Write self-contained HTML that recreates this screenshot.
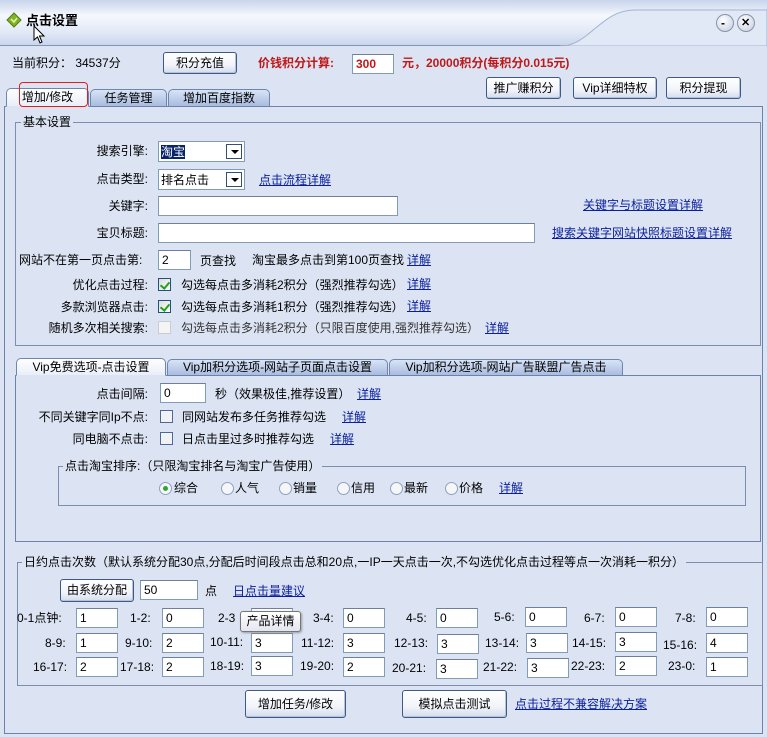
<!DOCTYPE html><html><head><meta charset="utf-8"><style>
*{box-sizing:border-box;margin:0;padding:0}
body{width:767px;height:737px;overflow:hidden;background:#dce4f4;font:12px "Liberation Sans","Noto Sans CJK SC",sans-serif;color:#000;position:relative}
.a{position:absolute;white-space:nowrap;line-height:14px}
.r{text-align:right}
.in{position:absolute;background:#fff;border:1px solid #7f9db9;border-top-color:#6d7f9a;height:20px;padding:2px 3px;line-height:14px}
.btn{position:absolute;border:1px solid #3d5a86;border-radius:3px;background:linear-gradient(#fff,#f2f4fa 60%,#d3dbec);text-align:center;line-height:20px;box-shadow:inset -1px -1px 0 #b5c2dc}
.lk{color:#0a1f9c;text-decoration:underline}
.cb{position:absolute;width:13px;height:13px;border:1px solid #1c5180;background:linear-gradient(135deg,#dcdcd6,#fff)}
.cb.ck::after{content:"";position:absolute;left:3px;top:1px;width:4px;height:7px;border:solid #21a121;border-width:0 2px 2px 0;transform:rotate(40deg)}
.fs{position:absolute;border:1px solid #7c8daf}
.lg{position:absolute;background:#dce4f4;padding:0 2px;line-height:14px}
.tab{position:absolute;border:1px solid #6e86ad;border-bottom:none;border-radius:5px 5px 0 0;background:linear-gradient(#d8e3f6,#a9bcdf);text-align:center;line-height:17px}
.tab.on{background:linear-gradient(#fff,#e9eef8)}
.rd{position:absolute;width:13px;height:13px;border:1px solid #8ea2c0;border-radius:50%;background:#f4f6f8}
.sel{position:absolute;background:#fff;border:1px solid #7f9db9;height:21px}
.sel b{position:absolute;right:2px;top:2px;width:16px;height:15px;border:1px solid #34506e;background:#fff}
.sel b::after{content:"";position:absolute;left:4px;top:5px;border:4px solid transparent;border-top:4px solid #000}
</style></head><body>
<!-- title bar -->
<div style="position:absolute;left:0;top:0;width:767px;height:46px;background:linear-gradient(#c9d5ec,#f5f8fd 35%,#e3eaf7 70%,#cbd6ec);border-bottom:1px solid #7f95bd"></div>
<svg style="position:absolute;left:560px;top:0" width="207" height="46"><path d="M0 46 C30 46 40 10 75 10 L207 10 L207 46 Z" fill="#e1e8f6" stroke="#a2b3d3"/></svg>
<svg style="position:absolute;left:6px;top:12px" width="16" height="16"><path d="M8 1 L15 8 L8 15 L1 8Z" fill="#7fb526" stroke="#4e7c12"/><path d="M5 7 L8 10 L11 6" fill="none" stroke="#e8f5a0" stroke-width="1.5"/></svg>
<div class="a" style="left:26px;top:14px;font-weight:bold;font-size:13px">点击设置</div>
<svg style="position:absolute;left:33px;top:25px" width="14" height="20"><path d="M1 1 L1 15 L4.5 12 L7 18 L9 17 L6.5 11 L11 11 Z" fill="#fff" stroke="#000"/></svg>
<div style="position:absolute;left:716px;top:14px;width:18px;height:18px;border-radius:50%;border:1px solid #8894aa;background:radial-gradient(circle at 40% 35%,#fff,#c2cbdc)"></div><div class="a" style="left:721px;top:16px;font-weight:bold">-</div>
<div style="position:absolute;left:737px;top:14px;width:18px;height:18px;border-radius:50%;border:1px solid #8894aa;background:radial-gradient(circle at 40% 35%,#fff,#c2cbdc)"></div><div class="a" style="left:741px;top:16px;font-weight:bold;font-size:11px">✕</div>

<div class="a" style="left:12px;top:56px">当前积分： 34537分</div>
<div class="btn" style="left:163px;top:52px;width:74px;height:22px">积分充值</div>
<div class="a" style="left:258px;top:56px;color:#c01818;font-weight:bold">价钱积分计算:</div>
<div class="in" style="left:352px;top:54px;width:42px;color:#c01818;font-weight:bold">300</div>
<div class="a" style="left:402px;top:56px;color:#c01818;font-weight:bold">元，20000积分(每积分0.015元)</div>
<div class="btn" style="left:486px;top:77px;width:75px;height:22px">推广赚积分</div>
<div class="btn" style="left:573px;top:77px;width:84px;height:22px">Vip详细特权</div>
<div class="btn" style="left:666px;top:77px;width:75px;height:22px">积分提现</div>

<!-- main tabs -->
<div style="position:absolute;left:4px;top:106px;width:759px;height:628px;border:1px solid #6b82aa"></div>
<div class="tab on" style="left:6px;top:88px;width:83px;height:19px;border-bottom:1px solid #dce4f4">增加/修改</div>
<div style="position:absolute;left:19px;top:82px;width:69px;height:25px;border:1px solid #e02020;border-radius:4px"></div>
<div class="tab" style="left:90px;top:89px;width:77px;height:17px">任务管理</div>
<div class="tab" style="left:168px;top:89px;width:102px;height:17px">增加百度指数</div>

<!-- basic settings -->
<div class="fs" style="left:15px;top:122px;width:746px;height:224px"></div>
<div class="lg" style="left:21px;top:115px">基本设置</div>
<div class="a r" style="left:0;width:148px;top:144px">搜索引擎:</div>
<div class="sel" style="left:158px;top:141px;width:87px"><span class="a" style="left:2px;top:3px;background:#0a246a;color:#fff">淘宝</span><b></b></div>
<div class="a r" style="left:0;width:148px;top:172px">点击类型:</div>
<div class="sel" style="left:158px;top:169px;width:87px"><span class="a" style="left:2px;top:3px">排名点击</span><b></b></div>
<div class="a lk" style="left:259px;top:173px">点击流程详解</div>
<div class="a r" style="left:0;width:148px;top:199px">关键字:</div>
<div class="in" style="left:158px;top:196px;width:240px"></div>
<div class="a lk" style="left:583px;top:198px">关键字与标题设置详解</div>
<div class="a r" style="left:0;width:148px;top:226px">宝贝标题:</div>
<div class="in" style="left:158px;top:223px;width:377px"></div>
<div class="a lk" style="left:552px;top:226px">搜索关键字网站快照标题设置详解</div>
<div class="a" style="left:19px;top:253px">网站不在第一页点击第:</div>
<div class="in" style="left:158px;top:250px;width:33px">2</div>
<div class="a" style="left:200px;top:254px">页查找</div>
<div class="a" style="left:252px;top:253px">淘宝最多点击到第100页查找</div>
<div class="a lk" style="left:407px;top:253px">详解</div>
<div class="a r" style="left:0;width:148px;top:278px">优化点击过程:</div>
<div class="cb ck" style="left:158px;top:278px"></div>
<div class="a" style="left:181px;top:278px">勾选每点击多消耗2积分（强烈推荐勾选）</div>
<div class="a lk" style="left:407px;top:277px">详解</div>
<div class="a r" style="left:0;width:148px;top:300px">多款浏览器点击:</div>
<div class="cb ck" style="left:158px;top:300px"></div>
<div class="a" style="left:181px;top:300px">勾选每点击多消耗1积分（强烈推荐勾选）</div>
<div class="a lk" style="left:407px;top:299px">详解</div>
<div class="a r" style="left:0;width:148px;top:321px">随机多次相关搜索:</div>
<div class="cb" style="left:158px;top:321px;border-color:#c8ccd4;background:#f4f4f2"></div>
<div class="a" style="left:181px;top:321px;color:#333">勾选每点击多消耗2积分（只限百度使用,强烈推荐勾选）</div>
<div class="a lk" style="left:485px;top:321px">详解</div>

<!-- second tabs -->
<div style="position:absolute;left:15px;top:375px;width:746px;height:167px;border:1px solid #6b82aa"></div>
<div class="tab on" style="left:16px;top:358px;width:150px;height:18px;border-bottom:1px solid #dce4f4">Vip免费选项-点击设置</div>
<div class="tab" style="left:167px;top:359px;width:221px;height:16px;line-height:15px">Vip加积分选项-网站子页面点击设置</div>
<div class="tab" style="left:389px;top:359px;width:234px;height:16px;line-height:15px">Vip加积分选项-网站广告联盟广告点击</div>
<div class="a r" style="left:0;width:148px;top:387px">点击间隔:</div>
<div class="in" style="left:160px;top:383px;width:46px">0</div>
<div class="a" style="left:215px;top:387px">秒（效果极佳,推荐设置）</div>
<div class="a lk" style="left:357px;top:387px">详解</div>
<div class="a r" style="left:0;width:148px;top:410px">不同关键字同Ip不点:</div>
<div class="cb" style="left:160px;top:410px;border-color:#4f6a92;background:#f0f2f6"></div>
<div class="a" style="left:182px;top:410px">同网站发布多任务推荐勾选</div>
<div class="a lk" style="left:342px;top:410px">详解</div>
<div class="a r" style="left:0;width:148px;top:432px">同电脑不点击:</div>
<div class="cb" style="left:160px;top:432px;border-color:#4f6a92;background:#f0f2f6"></div>
<div class="a" style="left:182px;top:432px">日点击里过多时推荐勾选</div>
<div class="a lk" style="left:330px;top:432px">详解</div>
<div class="fs" style="left:58px;top:466px;width:688px;height:40px"></div>
<div class="lg" style="left:63px;top:459px">点击淘宝排序:（只限淘宝排名与淘宝广告使用）</div>
<div class="rd" style="left:159px;top:482px"><div style="position:absolute;left:3px;top:3px;width:5px;height:5px;border-radius:50%;background:#2fa72f"></div></div><div class="a" style="left:174px;top:481px">综合</div>
<div class="rd" style="left:221px;top:482px"></div><div class="a" style="left:235px;top:481px">人气</div>
<div class="rd" style="left:279px;top:482px"></div><div class="a" style="left:293px;top:481px">销量</div>
<div class="rd" style="left:337px;top:482px"></div><div class="a" style="left:351px;top:481px">信用</div>
<div class="rd" style="left:390px;top:482px"></div><div class="a" style="left:404px;top:481px">最新</div>
<div class="rd" style="left:445px;top:482px"></div><div class="a" style="left:459px;top:481px">价格</div>
<div class="a lk" style="left:499px;top:481px">详解</div>

<!-- daily -->
<div class="fs" style="left:17px;top:562px;width:746px;height:124px"></div>
<div class="lg" style="left:22px;top:555px">日约点击次数（默认系统分配30点,分配后时间段点击总和20点,一IP一天点击一次,不勾选优化点击过程等点一次消耗一积分）</div>
<div class="btn" style="left:60px;top:579px;width:74px;height:23px">由系统分配</div>
<div class="in" style="left:140px;top:580px;width:58px">50</div>
<div class="a" style="left:205px;top:584px">点</div>
<div class="a lk" style="left:233px;top:584px">日点击量建议</div>

<div class="a" style="left:17px;top:611px">0-1点钟:</div><div class="in" style="left:76px;top:608px;width:42px">1</div>
<div class="a" style="left:130px;top:611px">1-2:</div><div class="in" style="left:162px;top:608px;width:42px">0</div>
<div class="a" style="left:218px;top:611px">2-3</div><div class="in" style="left:251px;top:608px;width:42px"></div>
<div class="a" style="left:313px;top:611px">3-4:</div><div class="in" style="left:343px;top:608px;width:42px">0</div>
<div class="a" style="left:406px;top:611px">4-5:</div><div class="in" style="left:436px;top:608px;width:42px">0</div>
<div class="a" style="left:494px;top:610px">5-6:</div><div class="in" style="left:525px;top:607px;width:42px">0</div>
<div class="a" style="left:584px;top:611px">6-7:</div><div class="in" style="left:615px;top:607px;width:42px">0</div>
<div class="a" style="left:675px;top:611px">7-8:</div><div class="in" style="left:706px;top:607px;width:42px">0</div>

<div class="a" style="left:45px;top:636px">8-9:</div><div class="in" style="left:76px;top:633px;width:42px">1</div>
<div class="a" style="left:125px;top:636px">9-10:</div><div class="in" style="left:162px;top:633px;width:42px">2</div>
<div class="a" style="left:210px;top:635px">10-11:</div><div class="in" style="left:251px;top:633px;width:42px">3</div>
<div class="a" style="left:301px;top:636px">11-12:</div><div class="in" style="left:343px;top:633px;width:42px">3</div>
<div class="a" style="left:394px;top:636px">12-13:</div><div class="in" style="left:437px;top:634px;width:42px">3</div>
<div class="a" style="left:485px;top:636px">13-14:</div><div class="in" style="left:526px;top:633px;width:42px">3</div>
<div class="a" style="left:572px;top:636px">14-15:</div><div class="in" style="left:615px;top:632px;width:42px">3</div>
<div class="a" style="left:663px;top:638px">15-16:</div><div class="in" style="left:706px;top:633px;width:42px">4</div>

<div class="a" style="left:33px;top:660px">16-17:</div><div class="in" style="left:76px;top:657px;width:42px">2</div>
<div class="a" style="left:120px;top:660px">17-18:</div><div class="in" style="left:162px;top:657px;width:42px">2</div>
<div class="a" style="left:210px;top:659px">18-19:</div><div class="in" style="left:251px;top:656px;width:42px">3</div>
<div class="a" style="left:300px;top:659px">19-20:</div><div class="in" style="left:343px;top:657px;width:42px">2</div>
<div class="a" style="left:392px;top:661px">20-21:</div><div class="in" style="left:436px;top:659px;width:42px">3</div>
<div class="a" style="left:483px;top:660px">21-22:</div><div class="in" style="left:527px;top:658px;width:42px">3</div>
<div class="a" style="left:571px;top:659px">22-23:</div><div class="in" style="left:615px;top:656px;width:42px">2</div>
<div class="a" style="left:668px;top:659px">23-0:</div><div class="in" style="left:706px;top:657px;width:42px">1</div>

<div style="position:absolute;left:240px;top:611px;width:61px;height:21px;border:1px solid #767676;border-radius:3px;background:linear-gradient(#fff,#e4e5f0);box-shadow:1px 1px 2px #999;line-height:19px;text-align:center">产品详情</div>

<div class="btn" style="left:245px;top:690px;width:101px;height:28px;line-height:26px">增加任务/修改</div>
<div class="btn" style="left:402px;top:690px;width:105px;height:28px;line-height:26px">模拟点击测试</div>
<div class="a lk" style="left:515px;top:697px">点击过程不兼容解决方案</div>
</body></html>
